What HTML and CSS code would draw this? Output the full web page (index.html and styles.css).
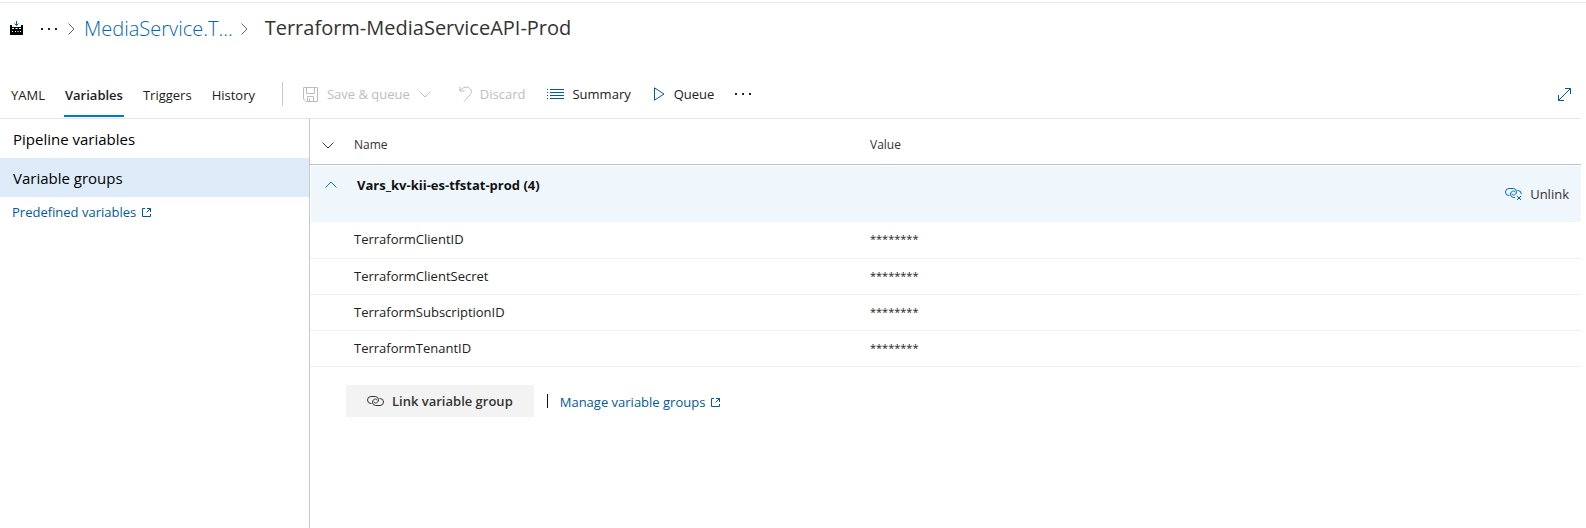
FILE: index.html
```html
<!DOCTYPE html>
<html lang="en">
<head>
<meta charset="utf-8">
<title>Terraform-MediaServiceAPI-Prod</title>
<link rel="stylesheet" href="styles.css">
</head>
<body>
<svg class="sprite" aria-hidden="true">
  <symbol id="chevron-right" viewBox="0 0 7 12"><path d="M.5.5 6 6 .5 11.5"/></symbol>
  <symbol id="chevron-down" viewBox="0 0 12 7"><path d="M.5.5 6 6 11.5.5"/></symbol>
  <symbol id="chevron-up" viewBox="0 0 12 7"><path d="M.5 6.5 6 1l5.5 5.5"/></symbol>
  <symbol id="dots" viewBox="0 0 18 4"><path class="solid" d="M1 1h2v2H1zM8 1h2v2H8zM15 1h2v2h-2z"/></symbol>
  <symbol id="external" viewBox="0 0 9 9"><path d="M3 .5H.5v8h8V6M5 .5h3.500V4M8.500.5l-4 4"/></symbol>
  <symbol id="link" viewBox="0 0 17 12"><path d="M4.500 8.500H4a3.500 3.500 0 0 1 0-7h4.500a3.300 3.300 0 0 1 3 3.300c0 2-1.500 3.200-3 3.200-1 0-1.500-.6-1.500-1.300M12.500 3.500h.5a3.500 3.500 0 0 1 0 7H8.500a3.300 3.300 0 0 1-3-3.300C5.500 5.200 7 4 8.500 4c1 0 1.500.6 1.500 1.300"/></symbol>
  <symbol id="unlink" viewBox="0 0 17 14"><path d="M4.500 8.500H4a3.500 3.500 0 0 1 0-7h4.500a3.300 3.300 0 0 1 3 3.300c0 2-1.500 3.200-3 3.200-1 0-1.500-.6-1.500-1.300M12.500 3.500h.5a3.500 3.500 0 0 1 3.300 3.500M10 10.500H8.500a3.300 3.300 0 0 1-3-3.300C5.500 5.200 7 4 8.500 4c1 0 1.500.6 1.500 1.300M12 9l4 4M16 9l-4 4"/></symbol>
</svg>

<header class="crumbs">
  <svg class="build" viewBox="0 0 13 14" aria-hidden="true"><path class="arrow" d="M6.500 0v4.500M4.500 2.500l2 2 2-2"/><path class="block" fill-rule="evenodd" d="M0 4h2v2h9V4h2v10H0zM2 7v1h2V7zm3.500 0v1h2V7zM9 7v1h2V7zM2 10v1h1v-1zm3 0v1h1v-1zm2.500 0v1h1v-1zm2.500 0v1h1v-1z"/></svg>
  <button class="plain crumb-more" aria-label="More locations"><svg class="dots"><use href="#dots"/></svg></button>
  <svg class="chev-r"><use href="#chevron-right"/></svg>
  <a class="crumb-link" href="#">MediaService.T...</a>
  <svg class="chev-r"><use href="#chevron-right"/></svg>
  <h1 class="title">Terraform-MediaServiceAPI-Prod</h1>
</header>

<div class="bar">
  <nav class="tabs">
    <a class="tab" href="#">YAML</a>
    <a class="tab active" href="#" aria-current="page">Variables</a>
    <a class="tab" href="#">Triggers</a>
    <a class="tab" href="#">History</a>
  </nav>
  <div class="commands">
    <button class="plain command save" disabled>
      <svg class="i15" viewBox="0 0 15 15"><path d="M.5.5h14v14H3l-2.500-2.500zM3.500.500v6h8v-6M4.500 14V9.500h6V14M6.500 11.500V14"/></svg>
      <span>Save &amp; queue</span>
      <svg class="chev"><use href="#chevron-down"/></svg>
    </button>
    <button class="plain command discard" disabled>
      <svg class="undo" viewBox="0 0 13 16"><path d="M1 .5V5h4.500M1 5C3 2 5.500.8 8 1.200c4 .6 5.500 4.300 3.300 7.300L5 15.500"/></svg>
      <span>Discard</span>
    </button>
    <button class="plain command summary">
      <svg class="list" viewBox="0 0 17 12"><path d="M0 1.500h1M3 1.500h14M0 4.500h1M3 4.500h14M0 7.500h1M3 7.500h14M0 10.500h1M3 10.500h14"/></svg>
      <span>Summary</span>
    </button>
    <button class="plain command queue">
      <svg class="play" viewBox="0 0 11 14"><path d="M.5.8v12.400L10 7z"/></svg>
      <span>Queue</span>
    </button>
    <button class="plain command" aria-label="More actions"><svg class="dots"><use href="#dots"/></svg></button>
  </div>
  <button class="plain expand" aria-label="Full screen"><svg class="i13" viewBox="0 0 13 13"><path d="M7 .5h5.500V6M12.500.5l-12 12M.5 7v5.500H6"/></svg></button>
</div>

<div class="body">
  <aside class="side">
    <a class="side-item" href="#">Pipeline variables</a>
    <a class="side-item selected" href="#">Variable groups</a>
    <a class="ext side-link" href="#">Predefined variables <svg class="i9"><use href="#external"/></svg></a>
  </aside>
  <main class="main">
    <table class="vars">
      <thead>
        <tr>
          <th class="toggle"><button class="plain" aria-label="Expand all"><svg class="chev"><use href="#chevron-down"/></svg></button></th>
          <th class="name">Name</th>
          <th>Value</th>
        </tr>
      </thead>
      <tbody>
        <tr class="group">
          <td colspan="3">
            <div class="group-row">
              <button class="plain group-name"><svg class="chev"><use href="#chevron-up"/></svg><span>Vars_kv-kii-es-tfstat-prod (4)</span></button>
              <button class="plain unlink"><svg class="unlink-icon"><use href="#unlink"/></svg><span>Unlink</span></button>
            </div>
          </td>
        </tr>
        <tr><td></td><td>TerraformClientID</td><td class="secret">********</td></tr>
        <tr><td></td><td>TerraformClientSecret</td><td class="secret">********</td></tr>
        <tr><td></td><td>TerraformSubscriptionID</td><td class="secret">********</td></tr>
        <tr><td></td><td>TerraformTenantID</td><td class="secret">********</td></tr>
      </tbody>
    </table>
    <div class="actions">
      <button class="link-group"><svg class="link-icon"><use href="#link"/></svg><span>Link variable group</span></button>
      <span class="divider"></span>
      <a class="ext" href="#">Manage variable groups <svg class="i9"><use href="#external"/></svg></a>
    </div>
  </main>
</div>
</body>
</html>
```
FILE: styles.css
```css
* { box-sizing: border-box; }

body {
  margin: 0;
  padding: 2px 5px 0 0;
  min-height: 100vh;
  display: flex;
  flex-direction: column;
  background: #fff;
  color: #212121;
  font: 13px/20px "Open Sans", "Noto Sans", sans-serif;
}

a { color: #005a9e; text-decoration: none; }
svg { flex: none; fill: none; stroke: currentColor; display: block; }
.solid { fill: currentColor; stroke: none; }
.sprite { position: absolute; width: 0; height: 0; }

.plain {
  border: 0;
  padding: 0;
  background: none;
  color: inherit;
  font: inherit;
  display: flex;
  align-items: center;
}

.dots { width: 18px; height: 4px; }
.chev { width: 12px; height: 7px; }
.chev-r { width: 7px; height: 12px; color: #666; }
.i9 { width: 9px; height: 9px; }
.i13 { width: 13px; height: 13px; }
.i15 { width: 15px; height: 15px; }
.undo { width: 13px; height: 16px; }
.list { width: 17px; height: 12px; }
.play { width: 11px; height: 14px; }

.crumbs {
  display: flex;
  align-items: center;
  height: 68px;
  padding: 0 10px 16px;
  margin-right: -5px;
  border-top: 1px solid #eaeaea;
}
.build { width: 13px; height: 14px; margin-bottom: 2px; }
.arrow { stroke: #0b5c9c; }
.block { fill: #000; stroke: none; }
.crumb-more { margin: 0 10px 0 17px; }
.crumb-link { margin: 0 8px 0 9px; font-size: 20px; line-height: 28px; font-weight: 300; color: #0067b5; }
.title { margin: 0 0 2px 17px; font-size: 20px; line-height: 28px; font-weight: 400; color: #333; }

.bar {
  display: flex;
  align-items: stretch;
  height: 49px;
  border-bottom: 1px solid #e4e4e4;
}
.tabs { display: flex; gap: 18px; padding: 0 0 1px 10px; }
.tab { padding: 15px 1px 0; color: #212121; }
.tab.active { font-weight: 600; border-bottom: 2px solid #0078d4; }
.commands {
  display: flex;
  align-items: center;
  height: 24px;
  margin: 12px 0 0 26px;
  padding-left: 20px;
  border-left: 1px solid #c8c8c8;
}
.command { gap: 8px; }
.command:disabled { color: #bdbdbd; }
.save { gap: 9px; margin-right: 28px; }
.discard { margin-right: 22px; }
.summary { margin-right: 23px; }
.queue { gap: 9px; margin-right: 20px; }
.summary svg, .queue svg { color: #005a9e; }
.expand { margin: 0 10px 0 auto; color: #005a9e; }

.body { display: flex; flex: 1; }
.side { flex: 0 0 310px; border-right: 1px solid #c8c8c8; }
.side-item { display: block; height: 39px; padding: 1px 13px 0; font-size: 15px; line-height: 39px; color: #000; }
.side-item.selected { background: #deecf9; }
.ext { display: inline-flex; align-items: center; gap: 6px; }
.side-link { margin: 5px 12px; }

.main { flex: 1; }
.vars { width: 100%; border-collapse: collapse; table-layout: fixed; }
.vars th { height: 45px; padding: 8px 0 0; border-bottom: 1px solid #c0c0c0; font-size: 12px; font-weight: 400; text-align: left; color: #333; }
.toggle { width: 44px; }
.name { width: 516px; }
.toggle button { margin-left: 12px; }
.vars td { height: 36px; padding: 0 0 2px; border-bottom: 1px solid #f0f0f0; }
.vars .secret { font-size: 11px; }
.vars .group td { padding: 1px 0 1px 1px; border: 0; }
.group-row { display: flex; justify-content: space-between; align-items: flex-start; height: 56px; padding: 9px 12px 0 14px; background: #eff6fc; }
.group-name { gap: 20px; font-weight: 700; color: #111; }
.group-name .chev { color: #0078d4; }
.unlink { gap: 8px; margin-top: 9px; color: #333; }
.unlink-icon { width: 17px; height: 14px; color: #0067b5; }
.actions { display: flex; align-items: center; padding: 18px 36px; }
.actions .ext { padding-top: 2px; }
.link-group { display: flex; align-items: center; gap: 8px; height: 32px; padding: 0 21px; border: 0; background: #f3f3f3; color: #333; font: inherit; font-weight: 600; }
.link-icon { width: 17px; height: 12px; }
.divider { width: 1px; height: 14px; margin: 0 12px 0 13px; background: #111; }
```
